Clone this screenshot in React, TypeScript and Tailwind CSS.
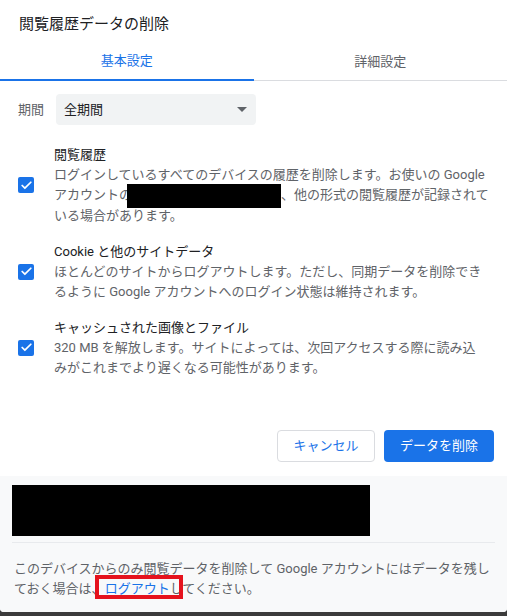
import { Check } from "lucide-react";

const font = "font-['Roboto','Noto_Sans_CJK_JP',sans-serif]";

function Box() {
  return (
    <span className="flex h-[16px] w-[16px] shrink-0 items-center justify-center rounded-[2px] bg-[#1a73e8]">
      <Check className="h-[13px] w-[13px] text-white" strokeWidth={3.2} />
    </span>
  );
}

function Item({ title, children }: { title: string; children: React.ReactNode }) {
  return (
    <div className="flex items-center gap-[20px] pl-[18px]">
      <Box />
      <div className="text-[13px] leading-[20px]">
        <div className="text-[#202124]">{title}</div>
        <div className="whitespace-nowrap text-[#5f6368]">{children}</div>
      </div>
    </div>
  );
}

export default function App() {
  return (
    <div className={`h-[616px] w-[507px] bg-[#3b3b3b] ${font}`}>
      <div className="flex h-[612px] flex-col overflow-hidden rounded-b-[4px] bg-white">
        {/* Header */}
        <div className="px-[19px] pt-[14px] pb-[6px] text-[15px] leading-[20px] text-[#202124]">
          閲覧履歴データの削除
        </div>

        {/* Tabs */}
        <div className="flex border-b border-[#dadce0]">
          <div className="-mb-px flex h-[41px] flex-1 items-center justify-center border-b-2 border-[#1a73e8] pt-[2px] text-[13px] text-[#1a73e8]">
            基本設定
          </div>
          <div className="-mb-px flex h-[41px] flex-1 items-center justify-center pt-[2px] text-[13px] text-[#5f6368]">
            詳細設定
          </div>
        </div>

        {/* Time range */}
        <div className="flex items-center gap-[12px] pl-[18px] pt-[13px]">
          <span className="text-[13px] text-[#5f6368]">期間</span>
          <div className="flex h-[31px] w-[200px] items-center justify-between rounded-[4px] bg-[#f1f3f4] pl-[8px] pr-[8px]">
            <span className="text-[13px] text-[#202124]">全期間</span>
            <svg width="10" height="5" viewBox="0 0 10 5" className="mr-[1px]">
              <path d="M0 0h10L5 5z" fill="#5f6368" />
            </svg>
          </div>
        </div>

        {/* Options */}
        <div className="mt-[20px] flex flex-col gap-[16px]">
          <Item title="閲覧履歴">
            ログインしているすべてのデバイスの履歴を削除します。お使いの Google
            <br />
            アカウントの
            <span className="-my-[2px] -ml-[5px] inline-block h-[24px] w-[154px] bg-black align-middle" />
            、他の形式の閲覧履歴が記録されて
            <br />
            いる場合があります。
          </Item>
          <Item title="Cookie と他のサイトデータ">
            ほとんどのサイトからログアウトします。ただし、同期データを削除でき
            <br />
            るように Google アカウントへのログイン状態は維持されます。
          </Item>
          <Item title="キャッシュされた画像とファイル">
            320 MB を解放します。サイトによっては、次回アクセスする際に読み込
            <br />
            みがこれまでより遅くなる可能性があります。
          </Item>
        </div>

        {/* Buttons */}
        <div className="mt-[52px] flex justify-end gap-[9px] pr-[13px]">
          <button className="h-[32px] w-[98px] rounded-[4px] border border-[#dadce0] bg-white text-[13px] text-[#1a73e8]">
            キャンセル
          </button>
          <button className="h-[32px] w-[110px] rounded-[4px] bg-[#1a73e8] text-[13px] text-white">
            データを削除
          </button>
        </div>

        {/* Footer */}
        <div className="mt-[14px] flex-1 bg-[#f8f9fa] px-[12px] pt-[9px]">
          <div className="h-[51px] w-[358px] bg-black" />
          <div className="mt-[6px] border-t border-[#e8eaed]" />
          <div className="relative mt-[16px] whitespace-nowrap pl-[2px] text-[13px] leading-[20px] text-[#5f6368]">
            このデバイスからのみ閲覧データを削除して Google アカウントにはデータを残し
            <br />
            ておく場合は、<span className="text-[#1a73e8]">ログアウト</span>してください。
            <span className="absolute left-[83px] top-[16px] h-[24px] w-[88px] border-[4px] border-[#e5121d]" />
          </div>
        </div>
      </div>
    </div>
  );
}
